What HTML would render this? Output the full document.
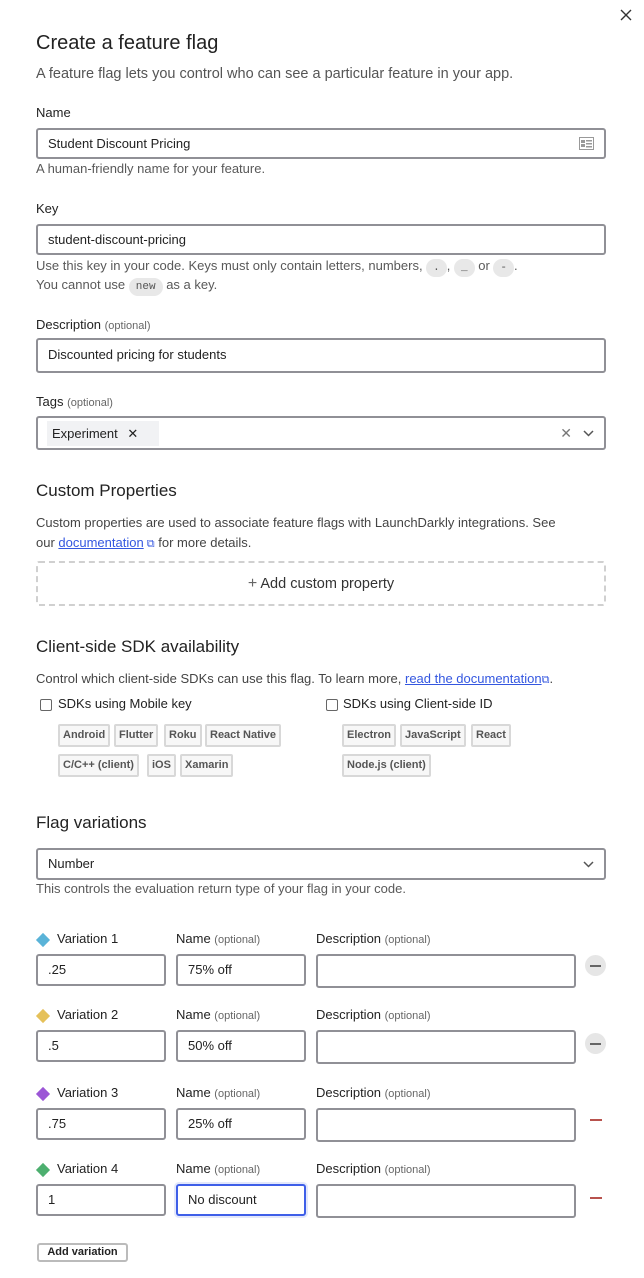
<!DOCTYPE html>
<html><head><meta charset="utf-8"><style>
*{box-sizing:border-box;margin:0;padding:0}
body{width:644px;height:1278px;background:#fff;font-family:"Liberation Sans",sans-serif;color:#222;position:relative;overflow:hidden}
.a{position:absolute;white-space:nowrap;line-height:18px}
.in{position:absolute;border:2px solid #909096;border-radius:3px;background:#fff;font-size:13px;line-height:18px;padding-left:10px;display:flex;align-items:center;color:#222}
.l{font-size:13px;color:#222}
.h{font-size:13px;color:#595959}
.o{font-size:11px;color:#666}
.sec{font-size:17px;color:#222}
.code{display:inline-block;background:#e8e8e8;border-radius:9px;padding:0 7px;font-size:11px;line-height:18px;font-family:"Liberation Mono",monospace;color:#555}
.chip{position:absolute;border:2px solid #d8d8d8;background:#f7f7f7;border-radius:2px;font-size:11px;color:#555;line-height:19px;padding:0 3px;font-weight:bold}
.dia{position:absolute;width:10px;height:10px;transform:rotate(45deg)}
.mc{position:absolute;width:21px;height:21px;border-radius:50%;background:#e6e6e6}
.mc::after{content:"";position:absolute;left:5px;top:9.5px;width:11px;height:2px;background:#666}
.rm{position:absolute;width:12px;height:2px;background:#b8524d}
a{color:#3457e0;text-decoration:underline}
</style></head><body>
<svg style="position:absolute;left:620px;top:9px" width="12" height="12" viewBox="0 0 12 12"><path d="M1 1l10 10M11 1L1 11" stroke="#333" stroke-width="1.4"/></svg>
<div class="a" style="left:36px;top:31px;font-size:20px;line-height:24px;color:#222">Create a feature flag</div>
<div class="a" style="left:36px;top:65px;font-size:14.5px;color:#555">A feature flag lets you control who can see a particular feature in your app.</div>

<div class="a l" style="left:36px;top:104px">Name</div>
<div class="in" style="left:36px;top:128px;width:570px;height:31px">Student Discount Pricing
<svg style="position:absolute;right:10px;top:7px" width="15" height="13" viewBox="0 0 15 13"><rect x="0.5" y="0.5" width="14" height="12" fill="none" stroke="#999"/><rect x="2" y="3" width="4" height="3" fill="#999"/><rect x="2" y="7" width="4" height="3" fill="#999"/><rect x="7" y="3" width="6" height="1.5" fill="#999"/><rect x="7" y="6" width="6" height="1.5" fill="#999"/><rect x="7" y="9" width="6" height="1.5" fill="#999"/></svg></div>
<div class="a h" style="left:36px;top:160px">A human-friendly name for your feature.</div>

<div class="a l" style="left:36px;top:200px">Key</div>
<div class="in" style="left:36px;top:224px;width:570px;height:31px">student-discount-pricing</div>
<div class="a h" style="left:36px;top:257px">Use this key in your code. Keys must only contain letters, numbers, <span class="code">.</span>, <span class="code">_</span> or <span class="code">-</span>.</div>
<div class="a h" style="left:36px;top:276px">You cannot use <span class="code">new</span> as a key.</div>

<div class="a l" style="left:36px;top:316px">Description <span class="o">(optional)</span></div>
<div class="in" style="left:36px;top:338px;width:570px;height:35px;align-items:flex-start;padding-top:6px">Discounted pricing for students</div>

<div class="a l" style="left:36px;top:393px">Tags <span class="o">(optional)</span></div>
<div class="in" style="left:36px;top:416px;width:570px;height:34px;padding-left:0">
<div style="position:absolute;left:9px;top:3px;width:112px;height:25px;background:#f1f2f4;font-size:13px;line-height:25px;padding-left:5px">Experiment <span style="margin-left:6px">✕</span></div>
<div style="position:absolute;right:32px;top:6px;font-size:14px;color:#777">✕</div>
<svg style="position:absolute;right:10px;top:12px" width="11" height="7" viewBox="0 0 11 7"><path d="M1 1l4.5 4.5L10 1" fill="none" stroke="#555" stroke-width="1.5"/></svg>
</div>

<div class="a sec" style="left:36px;top:482px">Custom Properties</div>
<div class="a h" style="left:36px;top:514px;color:#444">Custom properties are used to associate feature flags with LaunchDarkly integrations. See</div>
<div class="a h" style="left:36px;top:534px;color:#444">our <a>documentation</a><span style="color:#3457e0;font-size:11px"> ⧉</span> for more details.</div>
<div style="position:absolute;left:36px;top:561px;width:570px;height:45px;border:2px dashed #d0d0d0;border-radius:3px;text-align:center;line-height:41px;font-size:14.5px;color:#333"><span style="color:#666;font-size:16px">+</span> Add custom property</div>

<div class="a sec" style="left:36px;top:638px">Client-side SDK availability</div>
<div class="a h" style="left:36px;top:670px;color:#444">Control which client-side SDKs can use this flag. To learn more, <a>read the documentation</a><span style="color:#3457e0;font-size:11px">⧉</span>.</div>
<div style="position:absolute;left:40px;top:699px;width:12px;height:12px;border:1px solid #666;border-radius:2px"></div>
<div class="a l" style="left:58px;top:695px">SDKs using Mobile key</div>
<div style="position:absolute;left:326px;top:699px;width:12px;height:12px;border:1px solid #666;border-radius:2px"></div>
<div class="a l" style="left:343px;top:695px">SDKs using Client-side ID</div>

<div class="chip" style="left:58px;top:724px">Android</div>
<div class="chip" style="left:114px;top:724px">Flutter</div>
<div class="chip" style="left:164px;top:724px">Roku</div>
<div class="chip" style="left:205px;top:724px">React Native</div>
<div class="chip" style="left:58px;top:754px">C/C++ (client)</div>
<div class="chip" style="left:147px;top:754px">iOS</div>
<div class="chip" style="left:180px;top:754px">Xamarin</div>
<div class="chip" style="left:342px;top:724px">Electron</div>
<div class="chip" style="left:400px;top:724px">JavaScript</div>
<div class="chip" style="left:471px;top:724px">React</div>
<div class="chip" style="left:342px;top:754px">Node.js (client)</div>

<div class="a sec" style="left:36px;top:814px">Flag variations</div>
<div class="in" style="left:36px;top:848px;width:570px;height:32px">Number
<svg style="position:absolute;right:10px;top:11px" width="11" height="7" viewBox="0 0 11 7"><path d="M1 1l4.5 4.5L10 1" fill="none" stroke="#555" stroke-width="1.5"/></svg></div>
<div class="a h" style="left:36px;top:880px">This controls the evaluation return type of your flag in your code.</div>

<div class="dia" style="left:38px;top:935px;background:#5ab3d8"></div>
<div class="a l" style="left:57px;top:930px">Variation 1</div>
<div class="a l" style="left:176px;top:930px">Name <span class="o">(optional)</span></div>
<div class="a l" style="left:316px;top:930px">Description <span class="o">(optional)</span></div>
<div class="in" style="left:36px;top:954px;width:130px;height:32px">.25</div>
<div class="in" style="left:176px;top:954px;width:130px;height:32px">75% off</div>
<div class="in" style="left:316px;top:954px;width:260px;height:34px"></div>
<div class="mc" style="left:585px;top:955px"></div>

<div class="dia" style="left:38px;top:1011px;background:#e5c15a"></div>
<div class="a l" style="left:57px;top:1006px">Variation 2</div>
<div class="a l" style="left:176px;top:1006px">Name <span class="o">(optional)</span></div>
<div class="a l" style="left:316px;top:1006px">Description <span class="o">(optional)</span></div>
<div class="in" style="left:36px;top:1030px;width:130px;height:32px">.5</div>
<div class="in" style="left:176px;top:1030px;width:130px;height:32px">50% off</div>
<div class="in" style="left:316px;top:1030px;width:260px;height:34px"></div>
<div class="mc" style="left:585px;top:1033px"></div>

<div class="dia" style="left:38px;top:1089px;background:#9c56d6"></div>
<div class="a l" style="left:57px;top:1084px">Variation 3</div>
<div class="a l" style="left:176px;top:1084px">Name <span class="o">(optional)</span></div>
<div class="a l" style="left:316px;top:1084px">Description <span class="o">(optional)</span></div>
<div class="in" style="left:36px;top:1108px;width:130px;height:32px">.75</div>
<div class="in" style="left:176px;top:1108px;width:130px;height:32px">25% off</div>
<div class="in" style="left:316px;top:1108px;width:260px;height:34px"></div>
<div class="rm" style="left:590px;top:1119px"></div>

<div class="dia" style="left:38px;top:1165px;background:#4daf6f"></div>
<div class="a l" style="left:57px;top:1160px">Variation 4</div>
<div class="a l" style="left:176px;top:1160px">Name <span class="o">(optional)</span></div>
<div class="a l" style="left:316px;top:1160px">Description <span class="o">(optional)</span></div>
<div class="in" style="left:36px;top:1184px;width:130px;height:32px">1</div>
<div class="in" style="left:176px;top:1184px;width:130px;height:32px;border-color:#3f5fe8;box-shadow:0 0 0 2px #e3e8fb">No discount</div>
<div class="in" style="left:316px;top:1184px;width:260px;height:34px"></div>
<div class="rm" style="left:590px;top:1197px"></div>

<div style="position:absolute;left:37px;top:1243px;width:91px;height:19px;border:2px solid #bbb;border-radius:3px;font-size:11px;font-weight:bold;line-height:15px;text-align:center;color:#222">Add variation</div>
</body></html>
